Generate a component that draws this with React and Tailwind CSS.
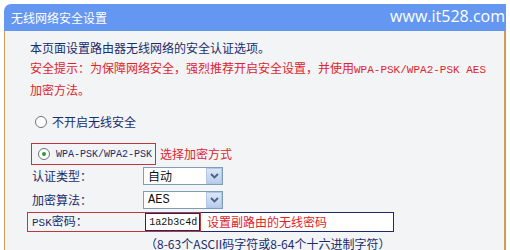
import React from "react";

const cjk = { fontFamily: '"Noto Sans CJK SC", "Liberation Sans", sans-serif' };
const mono = { fontFamily: '"Liberation Mono", "Noto Sans CJK SC", monospace' };

const Radio = ({ checked }) => (
  <span className="w-[12px] h-[12px] rounded-full border border-[#6f7378] bg-white flex items-center justify-center shrink-0">
    {checked && <span className="w-[4px] h-[4px] rounded-full bg-[#2f9a3a]"></span>}
  </span>
);

const Arrow = () => (
  <span className="w-[16px] h-[16px] bg-gradient-to-b from-[#dbe6f7] to-[#b9cdee] border border-[#b3c6e6] flex items-center justify-center">
    <svg width="9" height="6" viewBox="0 0 9 6">
      <path d="M1 1 L4.5 4.5 L8 1" fill="none" stroke="#4d6185" strokeWidth="1.8" />
    </svg>
  </span>
);

const SelectRow = ({ label, value, mono: isMono }) => (
  <div className="flex items-center h-[18px]">
    <span className="w-[113px] pl-[2px] text-[#1b2d6b]">{label}</span>
    <div className="w-[80px] h-[18px] border border-[#7f9db9] bg-white flex items-center">
      <span className="flex-1 pl-[4px] text-[#111] text-[12px]" style={isMono ? mono : cjk}>
        {value}
      </span>
      <Arrow />
    </div>
  </div>
);

export default function App() {
  return (
    <div className="w-[510px] h-[250px] bg-white overflow-hidden pt-[4px] pl-[4px] text-[12px]" style={cjk}>
      <div className="w-[502px]">
        <div className="h-[27px] bg-[#6497f2] rounded-tl-[7px] flex items-center justify-between pl-[7px] pr-[1px]">
          <span className="text-white text-[12px]">无线网络安全设置</span>
          <span className="text-white text-[16px] leading-none mb-[3px]" style={{ fontFamily: '"Open Sans", sans-serif' }}>
            www.it528.com
          </span>
        </div>
        <div className="h-[230px] bg-[#f2f4f6] border-l border-r-2 border-[#d29a55] pl-[25px] pt-[7px]">
          <div className="leading-[20px]">
            <div className="text-[#1b2d6b]">本页面设置路由器无线网络的安全认证选项。</div>
            <div className="text-[#e0242c]">
              安全提示：为保障网络安全，强烈推荐开启安全设置，并使用
              <span className="text-[11px]" style={mono}>WPA-PSK/WPA2-PSK AES</span>
            </div>
            <div className="text-[#e0242c]">加密方法。</div>
          </div>

          <div className="flex items-center h-[20px] mt-[12px] pl-[5px] gap-[5px]">
            <Radio />
            <span className="text-[#1b2d6b]">不开启无线安全</span>
          </div>

          <div className="flex items-center mt-[11px]">
            <div className="h-[22px] w-[125px] ml-[1px] border border-[#c0363a] flex items-center pl-[6px] gap-[6px]">
              <Radio checked />
              <span className="text-[10px] text-[#1b2d6b]" style={mono}>WPA-PSK/WPA2-PSK</span>
            </div>
            <span className="ml-[4px] text-[#e0242c]">选择加密方式</span>
          </div>

          <div className="mt-[2px]">
            <SelectRow label="认证类型：" value="自动" />
          </div>
          <div className="mt-[6px]">
            <SelectRow label="加密算法：" value="AES" mono />
          </div>

          <div className="flex items-stretch h-[20px] mt-[3px] -ml-[3px]">
            <div className="w-[174px] border border-[#c0363a] flex items-center pl-[4px]">
              <span className="w-[114px] text-[#1b2d6b]">
                <span style={mono} className="text-[11px]">PSK</span>密码：
              </span>
              <div className="w-[55px] h-[18px] border border-[#1e2a6e] bg-white flex items-center pl-[3px] text-[10px] text-[#111] overflow-hidden" style={mono}>
                1a2b3c4d
              </div>
            </div>
            <div className="w-[193px] h-[20px] border border-l-0 border-[#1e2a6e] bg-white flex items-center pl-[6px] text-[#e0242c]">
              设置副路由的无线密码
            </div>
          </div>

          <div className="mt-[3px] ml-[115px] leading-[18px] text-[#1b2d6b]">（8-63个ASCII码字符或8-64个十六进制字符）</div>
        </div>
      </div>
    </div>
  );
}
